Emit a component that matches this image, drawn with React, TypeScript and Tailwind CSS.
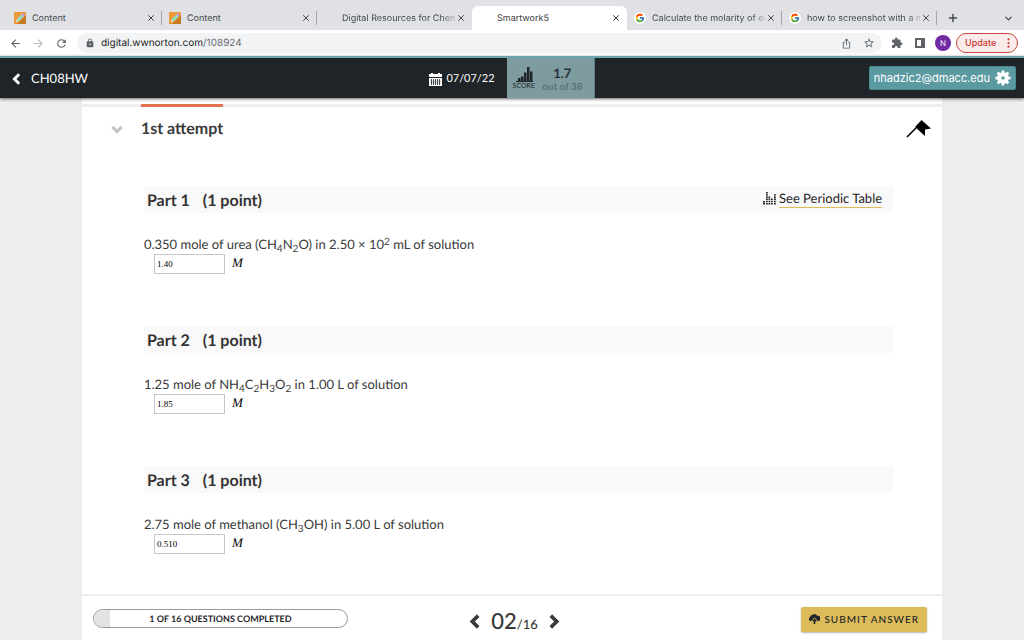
import React, { useState } from "react";
import {
  MdArrowBack,
  MdArrowForward,
  MdExtension,
  MdLock,
  MdOutlineIosShare,
  MdRefresh,
  MdStarBorder,
} from "react-icons/md";
import { FcGoogle } from "react-icons/fc";
import { ChevronDown, Plus, X } from "lucide-react";

type TabIcon = "pencil" | "google" | "none";

const tabs: { title: string; icon: TabIcon; active?: boolean; separator?: boolean; fade?: boolean }[] = [
  { title: "Content", icon: "pencil", separator: true },
  { title: "Content", icon: "pencil", separator: true },
  { title: "Digital Resources for Chem", icon: "none", fade: true },
  { title: "Smartwork5", icon: "none", active: true },
  { title: "Calculate the molarity of ea", icon: "google", separator: true, fade: true },
  { title: "how to screenshot with a m", icon: "google", separator: true, fade: true },
];

function PencilIcon() {
  return (
    <svg viewBox="0 0 12 12" className="size-3 shrink-0">
      <path d="M0 0h12v12H0z" fill="#ee9a38" />
      <path d="M12 3v9H3z" fill="#c77b25" />
      <path d="M2 10l1-3 5-5 2 2-5 5z" fill="#8fe0cf" />
      <path d="M7.6 2.4L9 1l2 2-1.4 1.4z" fill="#c98be0" />
      <path d="M2 10l.8-2.2 1.4 1.4z" fill="#fff3d0" />
    </svg>
  );
}

function Favicon({ icon }: { icon: TabIcon }) {
  if (icon === "pencil") return <PencilIcon />;
  if (icon === "google")
    return (
      <span className="flex size-3 shrink-0 items-center justify-center rounded-full bg-white">
        <FcGoogle className="size-[10px]" />
      </span>
    );
  return <span className="size-3 shrink-0" />;
}

function Chevron({ dir, className }: { dir: "left" | "right" | "down"; className: string }) {
  const d = {
    left: "M9.5 1.5L4 7l5.5 5.5",
    right: "M4.5 1.5L10 7l-5.5 5.5",
    down: "M1.5 4.5L7 10l5.5-5.5",
  }[dir];
  return (
    <svg viewBox="0 0 14 14" className={className} fill="none" stroke="currentColor" strokeWidth="3.4">
      <path d={d} />
    </svg>
  );
}

function BrowserChrome() {
  return (
    <div className="font-['Inter','Liberation_Sans',sans-serif]">
      <div className="flex h-[30px] items-end bg-[#dfe1e5] pl-[7px] text-[9px] text-[#45494d]">
        {tabs.map((tab, i) => (
          <div
            key={i}
            className={
              tab.active
                ? "relative flex h-6 min-w-0 max-w-[155px] flex-1 items-center gap-[6px] rounded-t-md bg-white pr-[6px] pl-[7px] text-[#3c4043]"
                : "relative flex h-6 min-w-0 max-w-[155px] flex-1 items-center gap-[6px] pr-[6px] pl-[7px]"
            }
          >
            <Favicon icon={tab.icon} />
            <span
              className={
                tab.fade
                  ? "mr-[-5px] min-w-0 flex-1 pt-px whitespace-nowrap [mask-image:linear-gradient(to_right,black_88%,transparent_104%)]"
                  : "min-w-0 flex-1 pt-px whitespace-nowrap"
              }
            >
              {tab.title}
            </span>
            <button aria-label="Close tab" className="flex size-[10px] shrink-0 items-center justify-center">
              <X className="size-[10px]" strokeWidth={2.4} />
            </button>
            {tab.separator && <span className="absolute top-[5px] right-0 h-[14px] w-px bg-[#a3a6aa]" />}
          </div>
        ))}
        <button aria-label="New tab" className="ml-[10px] flex h-6 items-center">
          <Plus className="size-3" strokeWidth={3} />
        </button>
        <button aria-label="Search tabs" className="mr-[10px] ml-auto flex h-6 items-center">
          <ChevronDown className="size-[11px]" strokeWidth={2.6} />
        </button>
      </div>
      <div className="flex h-[26px] items-center bg-white pr-[6px] pl-[9px] text-[#5f6368]">
        <button aria-label="Back">
          <MdArrowBack className="size-[13px]" />
        </button>
        <button aria-label="Forward" className="ml-[10px] text-[#b6b8bb]">
          <MdArrowForward className="size-[13px]" />
        </button>
        <button aria-label="Reload" className="ml-[10px]">
          <MdRefresh className="size-[13px]" />
        </button>
        <div className="ml-[9px] flex h-5 flex-1 items-center rounded-full bg-[#f1f3f4] pr-[7px] pl-2">
          <MdLock className="size-[10px]" />
          <span className="ml-[6px] text-[10px] text-[#202124]">
            digital.wwnorton.com<span className="text-[#6b6f74]">/108924</span>
          </span>
          <button aria-label="Share" className="ml-auto">
            <MdOutlineIosShare className="size-[11px]" />
          </button>
          <button aria-label="Bookmark" className="ml-[11px]">
            <MdStarBorder className="size-3" />
          </button>
        </div>
        <button aria-label="Extensions" className="ml-[9px]">
          <MdExtension className="size-3" />
        </button>
        <button aria-label="Side panel" className="ml-3 h-[10px] w-[10px] border-2 border-r-4 border-[#5f6368]" />
        <span className="ml-[10px] flex size-4 items-center justify-center rounded-full bg-[#7229a3] text-[8px] text-white">
          N
        </span>
        <button className="ml-[5px] flex h-5 w-[62px] items-center justify-between rounded-full border border-[#c5443b] bg-[#fbecec] pr-[7px] pl-2 text-[9px] font-medium text-[#c5352b]">
          Update
          <svg viewBox="0 0 3 11" className="h-[10px] w-[3px]" fill="currentColor">
            <circle cx="1.5" cy="1.5" r="1.2" />
            <circle cx="1.5" cy="5.5" r="1.2" />
            <circle cx="1.5" cy="9.5" r="1.2" />
          </svg>
        </button>
      </div>
    </div>
  );
}

function CalendarIcon() {
  return (
    <svg viewBox="0 0 13 13" className="size-[13px]" fill="currentColor">
      <path d="M2 0h2v1h5V0h2v1h2v3H0V1h2z" />
      <path d="M0 5h13v8H0z" />
      <path d="M2.500 6v6M4.500 6v6M6.500 6v6M8.500 6v6M10.500 6v6" stroke="#1e2427" strokeWidth=".8" />
      <path d="M1 8h11M1 10h11" stroke="#1e2427" strokeWidth=".3" />
    </svg>
  );
}

function GearIcon() {
  const angles = [0, 45, 90, 135, 180, 225, 270, 315];
  return (
    <svg viewBox="0 0 16 16" className="size-4" fill="currentColor">
      {angles.map((a) => (
        <path key={a} d="M6.200 3.500L6.800.4h2.400l.6 3.100z" transform={`rotate(${a} 8 8)`} />
      ))}
      <path fillRule="evenodd" d="M8 2.200a5.800 5.800 0 1 0 0 11.600A5.800 5.800 0 1 0 8 2.200zM8 6.200a1.800 1.800 0 1 1 0 3.600A1.800 1.800 0 1 1 8 6.200z" />
    </svg>
  );
}

function AppHeader() {
  return (
    <header className="z-10 grid h-[42px] grid-cols-[1fr_auto_1fr] items-center border-t-2 border-[#6ba4ab] bg-[#1e2427] text-white shadow-[0_1px_3px_rgba(0,0,0,0.6)]">
      <a href="#assignments" className="flex items-center gap-2 pt-[2px] pl-[11px] text-[13px]">
        <Chevron dir="left" className="size-3" />
        CH08HW
      </a>
      <div className="flex h-full items-center">
        <span className="flex items-center gap-1 pt-[2px] pr-3 text-[11px]">
          <CalendarIcon />
          07/07/22
        </span>
        <div className="flex h-full w-[88px] items-center border-r border-[#5d7f84] bg-[#7e9c9f] pl-[6px] text-[#1e2427]">
          <div className="flex flex-col items-center">
            <svg viewBox="0 0 18 15" className="h-[15px] w-[18px]" fill="currentColor">
              <path d="M3 11h2.500v3H3zM6 9.500h2.500v4.500H6zM9 5.500h2.500v8.500H9zM12 0h2.500v14h-2.500zM15 4.500h2.500v9.500h-2.500z" />
              <path d="M1 14h17v1H1z" />
            </svg>
            <span className="text-[7px] leading-[8px]">SCORE</span>
          </div>
          <div className="flex flex-1 flex-col items-center pt-1 pr-1 font-bold">
            <span className="text-[13px] leading-[14px] text-[#263238]">1.7</span>
            <span className="text-[10px] leading-[14px] text-[#577478]">out of 38</span>
          </div>
        </div>
      </div>
      <button className="mr-2 flex h-6 items-center gap-[5px] justify-self-end rounded-xs border border-[#4a8a91] bg-[#5b9aa1] px-1 font-['Inter','Liberation_Sans',sans-serif] text-[11px]">
        nhadzic2@dmacc.edu
        <GearIcon />
      </button>
    </header>
  );
}

const Sub = ({ children }: { children: React.ReactNode }) => (
  <sub className="bottom-[-3px] text-[10px]">{children}</sub>
);

const parts = [
  {
    answer: "1.40",
    text: (
      <>
        0.350 mole of urea (CH<Sub>4</Sub>N<Sub>2</Sub>O) in 2.50 × 10<sup className="top-[-4px] text-[10px]">2</sup> mL of
        solution
      </>
    ),
  },
  {
    answer: "1.85",
    text: (
      <>
        1.25 mole of NH<Sub>4</Sub>C<Sub>2</Sub>H<Sub>3</Sub>O<Sub>2</Sub> in 1.00 L of solution
      </>
    ),
  },
  {
    answer: "0.510",
    text: (
      <>
        2.75 mole of methanol (CH<Sub>3</Sub>OH) in 5.00 L of solution
      </>
    ),
  },
];

function PeriodicIcon() {
  return (
    <svg viewBox="0 0 13 13" className="size-[13px]" fill="currentColor">
      <path d="M0 9h2v1.500H0zM0 11h2v1.500H0zM3 0h1.800v1.500H3zM3 2.200h1.800v1.500H3zM3 4.400h1.800v1.500H3zM3 6.600h1.800v1.500H3zM3 8.800h1.800v1.500H3zM3 11h1.800v1.500H3zM5.500 4.400h1.700v1.500H5.500zM5.500 6.600h1.700v1.500H5.500zM5.500 8.800h1.700v1.500H5.500zM5.500 11h1.700v1.500H5.500zM8 6.600h1.700v1.500H8zM8 8.800h1.700v1.500H8zM8 11h1.700v1.500H8zM11 2.200h1.800v1.500H11zM11 4.400h1.800v1.500H11zM11 6.600h1.800v1.500H11zM11 8.800h1.800v1.500H11zM11 11h1.800v1.500H11z" />
    </svg>
  );
}

function Part({ index }: { index: number }) {
  const part = parts[index];
  const [value, setValue] = useState(part.answer);
  const id = `part-${index + 1}`;
  return (
    <section>
      <div className="flex h-[27px] items-center justify-between bg-[#f9f9f9] pr-[11px] pl-[3px]">
        <h3 className="flex gap-[13px] pt-[2px] text-[16px] font-bold text-[#333]">
          <span>Part {index + 1}</span>
          <span>(1 point)</span>
        </h3>
        {index === 0 && (
          <a href="#periodic-table" className="flex items-center gap-[3px] pb-[2px] text-[13px] text-[#1e2427]">
            <PeriodicIcon />
            <span className="border-b border-[#dcbb5a] leading-[18px]">See Periodic Table</span>
          </a>
        )}
      </div>
      <label htmlFor={id} className="mt-[21px] block h-5 text-[13px] leading-5 text-[#3a3a3a]">
        {part.text}
      </label>
      <div className="flex h-5 gap-[7px] pl-[10px] font-['Liberation_Serif',serif]">
        <input
          id={id}
          value={value}
          onChange={(e) => setValue(e.target.value)}
          className="h-5 w-[71px] border border-[#c8c8c8] bg-white px-[2px] text-[9px] text-black"
        />
        <span className="text-[13px] leading-[18px] text-black italic">M</span>
      </div>
    </section>
  );
}

export default function App() {
  return (
    <div className="flex min-h-screen flex-col bg-[#ededed] font-['Lato',sans-serif] [text-rendering:geometricPrecision]">
      <BrowserChrome />
      <AppHeader />
      <main className="mx-auto flex w-[84%] flex-1 flex-col bg-white">
        <div className="mt-[6px] flex h-[3px] bg-[#ededed] pl-[59px]">
          <div className="w-[82px] bg-[#e07050]" />
        </div>
        <div className="flex h-11 items-center pr-[11px] pl-[29px]">
          <button aria-label="Collapse attempt" className="text-[#c4c4c4]">
            <Chevron dir="down" className="size-3" />
          </button>
          <h2 className="ml-[18px] text-[16px] font-bold text-[#3a3a3a]">1st attempt</h2>
          <button aria-label="Pin" className="ml-auto">
            <svg viewBox="0 0 25 18" className="h-[18px] w-[25px]">
              <path d="M1 17L10 8" stroke="#000" strokeWidth="1.600" />
              <path d="M15.500 0L25 8.500l-6 1v6.500L9 7z" />
            </svg>
          </button>
        </div>
        <div className="mt-[35px] mr-[49px] ml-[62px] flex flex-col gap-[52px] pb-9">
          {parts.map((_, i) => (
            <Part key={i} index={i} />
          ))}
        </div>
        <footer className="mt-auto grid h-[46px] grid-cols-[1fr_auto_1fr] items-center border-t-2 border-[#ededed] pr-[15px] pl-[11px]">
          <div className="flex h-[19px] w-[255px] overflow-hidden rounded-full border border-[#999]">
            <div className="w-4 shrink-0 bg-[#e3e3e3]" />
            <span className="flex-1 pr-4 text-center text-[9px] leading-[18px] font-bold text-[#1e2427]">
              1 OF 16 QUESTIONS COMPLETED
            </span>
          </div>
          <nav className="flex items-center gap-2 pt-[6px] pl-[9px] text-[#3a3a3a]">
            <button aria-label="Previous question">
              <Chevron dir="left" className="size-[15px]" />
            </button>
            <span className="pt-[2px] text-[22px] leading-7 font-medium">
              02<span className="text-[13px]">/16</span>
            </span>
            <button aria-label="Next question">
              <Chevron dir="right" className="size-[15px]" />
            </button>
          </nav>
          <button className="mt-[2px] flex h-[25px] items-center gap-1 justify-self-end rounded-xs bg-[#dcbb5a] px-2 text-[10px] font-medium tracking-[1px] text-[#1e2427] shadow-[0_1px_2px_rgba(0,0,0,0.3)]">
            <svg viewBox="0 0 11 10" className="h-[10px] w-[11px]" fill="currentColor">
              <path d="M2 7.300A2.200 2.200 0 0 1 1 3.200 2.600 2.600 0 0 1 3.500.9a3 3 0 0 1 4.700.8A2.700 2.700 0 0 1 9 7.300L5.500 3.200z" />
              <path d="M5.500 4.200L8 7.200H6.300V10H4.700V7.200H3z" />
            </svg>
            SUBMIT ANSWER
          </button>
        </footer>
      </main>
    </div>
  );
}
